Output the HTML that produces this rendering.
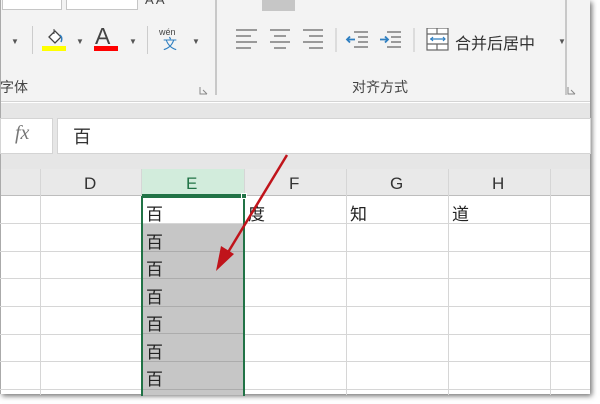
<!DOCTYPE html>
<html><head><meta charset="utf-8"><style>
*{margin:0;padding:0;box-sizing:border-box}
body{width:600px;height:404px;background:#fff;position:relative;overflow:hidden;font-family:"Liberation Sans","Noto Sans CJK SC",sans-serif}
.a{position:absolute}
.cj{font-family:"Noto Sans CJK SC",sans-serif}
</style></head><body>
<div class="a" style="left:0;top:0;width:590px;height:394px;box-shadow:2px 2px 5px rgba(0,0,0,.55);background:#fff"></div>
<div class="a" style="left:0;top:0;width:590px;height:102px;background:#f3f3f3;border-bottom:1px solid #d4d4d4"></div>
<div class="a" style="left:0;top:0;width:1px;height:394px;background:#aaa"></div>
<div class="a" style="left:2px;top:0;width:60px;height:10px;background:#fff;border:1px solid #c6c6c6;border-top:0"></div>
<div class="a" style="left:66px;top:0;width:72px;height:10px;background:#fff;border:1px solid #c6c6c6;border-top:0"></div>
<div class="a" style="left:145px;top:-8px;font-size:13px;color:#444">A A</div>
<div class="a" style="left:215px;top:0;width:2px;height:95px;background:#c8c8c8"></div>
<div class="a" style="left:262px;top:0;width:33px;height:11px;background:#c6c6c6"></div>
<div class="a" style="left:565px;top:0;width:2px;height:95px;background:#c8c8c8"></div>
<div class="a" style="left:11px;top:37px;font-size:8px;color:#555">▼</div>
<div class="a" style="left:32px;top:26px;width:1px;height:28px;background:#ccc"></div>
<svg class="a" style="left:42px;top:27px" width="26" height="26"><path d="M7 10 L13 4 L19 10 L13 16 Z" fill="#fff" stroke="#444" stroke-width="1.3"/><path d="M12 2 v5" stroke="#444"/><path d="M18 8 q3 3 1 7" stroke="#2f7fc1" stroke-width="1.5" fill="none"/></svg>
<div class="a" style="left:42px;top:46px;width:24px;height:5px;background:#ffff00"></div>
<div class="a" style="left:76px;top:37px;font-size:8px;color:#555">▼</div>
<div class="a" style="left:95px;top:23px;font-size:23px;color:#444">A</div>
<div class="a" style="left:94px;top:46px;width:24px;height:5px;background:#f00"></div>
<div class="a" style="left:129px;top:37px;font-size:8px;color:#555">▼</div>
<div class="a" style="left:147px;top:26px;width:1px;height:28px;background:#ccc"></div>
<div class="a" style="left:159px;top:27px;font-size:9px;color:#444">wén</div>
<div class="a cj" style="left:163px;top:34px;font-size:14px;color:#2f7fc1">文</div>
<div class="a" style="left:192px;top:37px;font-size:8px;color:#555">▼</div>
<svg class="a" style="left:234px;top:28px" width="330" height="24" stroke="#666" stroke-width="1.2">
<path d="M2 2h21M2 8h15M2 14h21M2 20h15"/>
<path d="M36 2h20M40 8h12M36 14h20M40 20h12"/>
<path d="M69 2h20M75 8h14M69 14h20M75 20h14"/>
<path d="M102 0v26" stroke="#ccc"/>
<path d="M120 4h14M124 9h10M124 14h10M120 19h14"/><path d="M121 11.5h-8m3-3l-3 3 3 3" stroke="#2f7fc1" stroke-width="1.8" fill="none"/>
<path d="M153 4h14M157 9h10M157 14h10M153 19h14"/><path d="M146 11.5h8m-3-3l3 3-3 3" stroke="#2f7fc1" stroke-width="1.8" fill="none"/>
<path d="M180 0v26" stroke="#ccc"/>
<rect x="193" y="0" width="21" height="22" fill="#fff" stroke="#666"/><path d="M193 6h21M193 16h21M203 0v6M203 16v6" /><path d="M196 11h15m-12-2l-2 2 2 2m10-4l2 2-2 2" stroke="#2f7fc1" fill="none"/>
</svg>
<div class="a cj" style="left:455px;top:30px;font-size:16px;color:#333">合并后居中</div>
<div class="a" style="left:558px;top:37px;font-size:8px;color:#555">▼</div>
<div class="a cj" style="left:0;top:77px;font-size:14px;color:#444">字体</div>
<div class="a cj" style="left:352px;top:77px;font-size:14px;color:#444">对齐方式</div>
<svg class="a" style="left:199px;top:86px" width="10" height="10" stroke="#888" fill="none"><path d="M1 1v7h7M4 4l4 4"/></svg>
<svg class="a" style="left:567px;top:86px" width="10" height="10" stroke="#888" fill="none"><path d="M1 1v7h7M4 4l4 4"/></svg>
<div class="a" style="left:1px;top:103px;width:589px;height:66px;background:#e6e6e6"></div>
<div class="a" style="left:0;top:118px;width:53px;height:36px;background:#fff;border:1px solid #d4d4d4"></div>
<div class="a" style="left:15px;top:122px;font-family:'Liberation Serif',serif;font-style:italic;font-size:20px;color:#777">fx</div>
<div class="a" style="left:57px;top:118px;width:534px;height:36px;background:#fff;border:1px solid #d4d4d4"></div>
<div class="a cj" style="left:73px;top:123px;font-size:18px;color:#333">百</div>
<div class="a" style="left:1px;top:169px;width:589px;height:27px;background:#e9e9e9;border-bottom:1px solid #bdbdbd"></div>
<div class="a" style="left:141px;top:169px;width:103px;height:27px;background:#d2ecdc;border-bottom:2px solid #217346"></div>
<svg class="a" style="left:0;top:169px" width="590" height="226">
<g stroke="#d6d6d6"><path d="M40.5 0v226M141.5 0v226M244.5 0v226M346.5 0v226M448.5 0v226M550.5 0v226"/>
<path d="M0 54.5h590M0 82.5h590M0 109.5h590M0 137.5h590M0 165.5h590M0 192.5h590M0 220.5h590"/></g>
</svg>
<div class="a" style="left:142px;top:224px;width:101px;height:171px;background:#c6c6c6"></div>
<svg class="a" style="left:141px;top:224px" width="103" height="171"><g stroke="#acacac"><path d="M0 27.5h103M0 54.5h103M0 82.5h103M0 109.5h103M0 137.5h103M0 165.5h103"/></g></svg>
<div class="a" style="left:141px;top:196px;width:104px;height:200px;border:2px solid #217346;border-bottom:0"></div>
<div class="a" style="left:241px;top:193px;width:6px;height:6px;background:#217346;border:1px solid #fff"></div>
<div class="a" style="left:84px;top:174px;font-size:17px;color:#333">D</div>
<div class="a" style="left:186px;top:174px;font-size:17px;color:#217346">E</div>
<div class="a" style="left:289px;top:174px;font-size:17px;color:#333">F</div>
<div class="a" style="left:390px;top:174px;font-size:17px;color:#333">G</div>
<div class="a" style="left:492px;top:174px;font-size:17px;color:#333">H</div>
<div class="a cj" style="left:146px;top:199px;font-size:17px;color:#222;line-height:27.5px">百<br>百<br>百<br>百<br>百<br>百<br>百</div>
<div class="a cj" style="left:248px;top:199px;font-size:17px;color:#222;line-height:27.5px">度</div>
<div class="a cj" style="left:350px;top:199px;font-size:17px;color:#222;line-height:27.5px">知</div>
<div class="a cj" style="left:452px;top:199px;font-size:17px;color:#222;line-height:27.5px">道</div>
<svg class="a" style="left:0;top:0" width="600" height="404"><path d="M287 155 L227 254" stroke="#c0141b" stroke-width="2.5"/><path d="M216 271 L221 246 L234 254 Z" fill="#c0141b"/></svg>
</body></html>
